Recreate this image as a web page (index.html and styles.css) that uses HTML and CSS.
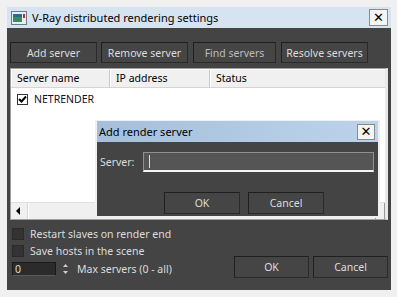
FILE: index.html
```html
<!DOCTYPE html>
<html lang="en">
<head>
    <meta charset="UTF-8">
    <title>V-Ray distributed rendering settings</title>
    <link rel="stylesheet" href="styles.css">
</head>
<body>
    <div class="window">
        <div class="titlebar">
            <svg class="app-icon" width="16" height="14" viewBox="0 0 16 14">
                <rect x="0.5" y="0.5" width="15" height="13" fill="#e8eef4" stroke="#6a7a8a"/>
                <rect x="2" y="3" width="9" height="8" fill="#3a8a5a"/>
                <rect x="2" y="3" width="9" height="3" fill="#2a6a9a"/>
                <rect x="12" y="3" width="2" height="4" fill="#c03020"/>
            </svg>
            <span class="title">V-Ray distributed rendering settings</span>
            <div class="close-btn">✕</div>
        </div>
        <div class="body">
            <div class="toolbar">
                <button class="btn tb">Add server</button>
                <button class="btn tb">Remove server</button>
                <button class="btn tb disabled">Find servers</button>
                <button class="btn tb">Resolve servers</button>
            </div>
            <div class="list">
                <div class="list-head">
                    <div class="col c1">Server name</div>
                    <div class="col c2">IP address</div>
                    <div class="col c3">Status</div>
                </div>
                <div class="list-rows">
                    <div class="row">
                        <span class="check on">
                            <svg width="9" height="9" viewBox="0 0 9 9"><path d="M1 4 L3.5 6.5 L8 1.5" fill="none" stroke="#000" stroke-width="2"/></svg>
                        </span>
                        <span class="name">NETRENDER</span>
                    </div>
                </div>
                <div class="hscroll">
                    <div class="arrow left"></div>
                    <div class="track"></div>
                    <div class="arrow right">·</div>
                </div>

                <div class="dialog">
                    <div class="dlg-title">
                        <span>Add render server</span>
                        <div class="close-btn small">✕</div>
                    </div>
                    <div class="dlg-body">
                        <div class="field">
                            <label>Server:</label>
                            <div class="input"><span class="caret"></span></div>
                        </div>
                        <div class="dlg-buttons">
                            <button class="btn wide">OK</button>
                            <button class="btn wide">Cancel</button>
                        </div>
                    </div>
                </div>
            </div>
            <div class="bottom">
                <div class="options">
                    <div class="opt"><span class="check dark"></span>Restart slaves on render end</div>
                    <div class="opt"><span class="check dark"></span>Save hosts in the scene</div>
                    <div class="opt">
                        <div class="spin-input">0</div>
                        <div class="spinner">
                            <svg width="7" height="14" viewBox="0 0 7 14">
                                <path d="M3.5 2 L6 5 L1 5 Z" fill="#cfcfcf"/>
                                <path d="M3.5 12 L6 9 L1 9 Z" fill="#cfcfcf"/>
                            </svg>
                        </div>
                        Max servers (0 - all)
                    </div>
                </div>
                <div class="main-buttons">
                    <button class="btn wide">OK</button>
                    <button class="btn wide">Cancel</button>
                </div>
            </div>
        </div>
    </div>
</body>
</html>
```

FILE: styles.css
```css
body {
    margin: 0;
    padding: 7px 6px 7px 7px;
    background: #f0f0f0;
    font-family: 'Noto Sans', 'DejaVu Sans', sans-serif;
    font-size: 10.5px;
}

.window {
    width: 384px;
    height: 283px;
    display: flex;
    flex-direction: column;
}

.titlebar {
    flex-shrink: 0;
    height: 21px;
    background: #d6e3f0;
    display: flex;
    align-items: center;
    padding: 0 3px 0 4px;
    color: #000;
}

.app-icon {
    margin-right: 5px;
}

.title {
    font-size: 11px;
    flex: 1;
}

.close-btn {
    width: 17px;
    height: 15px;
    border: 1px solid #8a8a8a;
    background: #f4f4f4;
    display: flex;
    justify-content: center;
    align-items: center;
    font-size: 13px;
    font-weight: bold;
    line-height: 1;
}

.body {
    flex: 1;
    background: #444444;
    color: #dcdcdc;
    padding: 14px 3px 0 3px;
    display: flex;
    flex-direction: column;
}

.toolbar {
    display: flex;
    gap: 4px;
    margin-bottom: 5px;
    flex-shrink: 0;
}

.btn {
    background: #454545;
    border: 1px solid #1f1f1f;
    border-right-color: #2a2a2a;
    border-bottom-color: #2a2a2a;
    color: #dcdcdc;
    font-family: inherit;
    font-size: 10.5px;
    height: 21px;
    padding: 0;
}

.tb {
    width: 87px;
}

.tb.disabled {
    color: #bcbcbc;
    margin-left: 1px;
    width: 83px;
    margin-right: 1px;
}

.list {
    position: relative;
    box-sizing: border-box;
    height: 152px;
    flex-shrink: 0;
    background: #fff;
    border: 1px solid #a0a0a0;
    border-right: 3px solid #e8e8e8;
    display: flex;
    flex-direction: column;
    color: #000;
}

.list-head {
    display: flex;
    height: 17px;
    background: #f0f0f0;
    border-bottom: 1px solid #d5d5d5;
    border-top: 1px solid #fff;
}

.col {
    padding-left: 5px;
    line-height: 16px;
    border-right: 1px solid #c8c8c8;
    border-left: 1px solid #fff;
}

.c1 { width: 92px; }
.c2 { width: 93px; }
.c3 { flex: 1; border-right: none; }

.list-rows {
    flex: 1;
    padding: 4px 0 0 6px;
}

.row {
    display: flex;
    align-items: center;
}

.check {
    width: 11px;
    height: 11px;
    display: inline-flex;
    justify-content: center;
    align-items: center;
    box-sizing: border-box;
}

.check.on {
    border: 1px solid #333;
    background: #fff;
    margin-right: 6px;
}

.name {
    color: #101030;
}

.hscroll {
    height: 16px;
    display: flex;
    background: #f0f0f0;
    border-top: 1px solid #e0e0e0;
}

.arrow {
    width: 16px;
    background: #f0f0f0;
    border-right: 1px solid #d8d8d8;
    position: relative;
}

.arrow.left::after {
    content: "";
    position: absolute;
    left: 5px;
    top: 4px;
    border-top: 4px solid transparent;
    border-bottom: 4px solid transparent;
    border-right: 4px solid #000;
}

.track {
    flex: 1;
    border-left: 1px solid #fff;
}

.arrow.right {
    border-left: 1px solid #999;
    font-size: 10px;
    line-height: 14px;
    text-align: left;
    width: 8px;
    border-right: 1px solid #999;
}

.dialog {
    position: absolute;
    left: 84px;
    top: 51px;
    width: 281px;
    height: 95px;
    border: 2px solid #f0f0f0;
    border-top: 1px solid #f0f0f0;
    background: #444444;
    display: flex;
    flex-direction: column;
}

.dlg-title {
    height: 21px;
    background: linear-gradient(to right, #a5bfdb, #bcd3ea);
    display: flex;
    align-items: center;
    padding: 0 3px 0 2px;
    color: #000;
    font-size: 11px;
    justify-content: space-between;
}

.close-btn.small {
    width: 16px;
    height: 14px;
}

.dlg-body {
    flex: 1;
    display: flex;
    flex-direction: column;
    color: #dcdcdc;
    padding: 10px 4px 0 3px;
}

.field {
    display: flex;
    align-items: center;
}

.field label {
    width: 43px;
}

.input {
    flex: 1;
    height: 17px;
    background: #555555;
    border: 1px solid #909090;
    border-bottom: 2px solid #f4f4f4;
    display: flex;
    align-items: center;
}

.caret {
    width: 1px;
    height: 13px;
    background: #dcdcdc;
    margin-left: 5px;
}

.dlg-buttons {
    display: flex;
    gap: 8px;
    margin-top: 20px;
    padding-left: 64px;
}

.wide {
    width: 76px;
    height: 22px;
}

.bottom {
    flex: 1;
    display: flex;
    justify-content: space-between;
    padding: 8px 0 12px 2px;
}

.options {
    display: flex;
    flex-direction: column;
    gap: 5px;
}

.opt {
    display: flex;
    align-items: center;
    height: 12px;
}

.check.dark {
    width: 12px;
    height: 12px;
    background: #333;
    border: 1px solid #2a2a2a;
    margin-right: 6px;
}

.opt:last-child {
    height: 14px;
}

.spin-input {
    width: 40px;
    height: 12px;
    background: #2b2b2b;
    border: 1px solid #1a1a1a;
    border-bottom-color: #5a5a5a;
    color: #dcdcdc;
    padding-left: 2px;
    line-height: 12px;
}

.spinner {
    margin: 0 8px 0 6px;
    display: flex;
}

.main-buttons {
    display: flex;
    gap: 4px;
    align-items: flex-end;
}

.main-buttons .wide {
    width: 75px;
}
```
